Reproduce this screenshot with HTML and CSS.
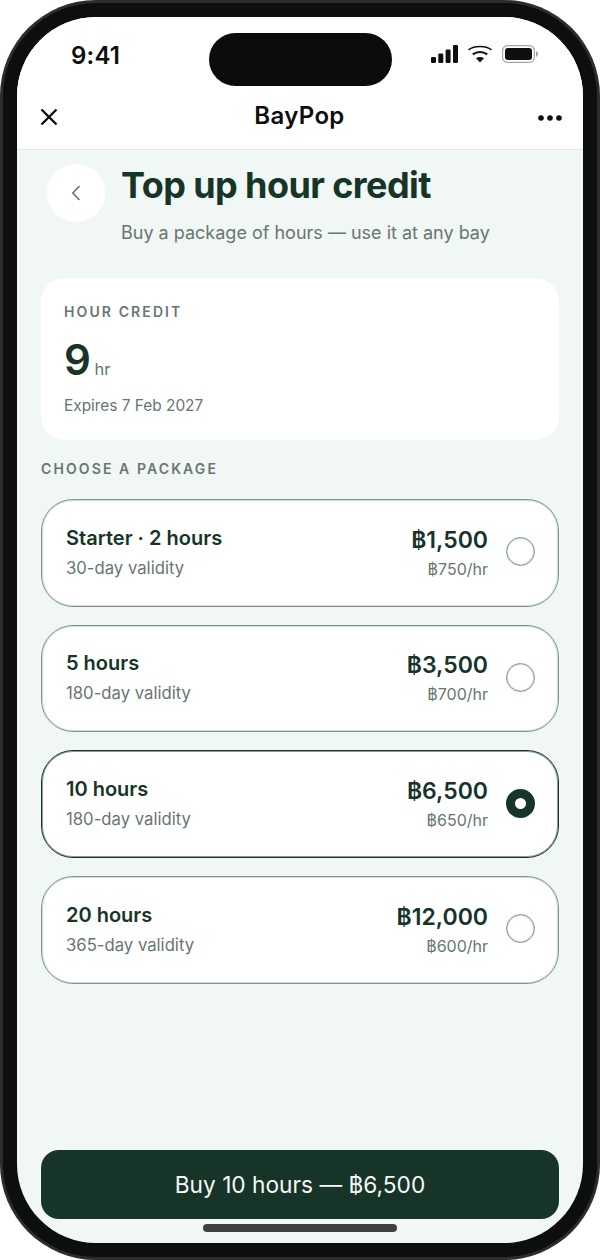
FILE: index.html
```html
<!DOCTYPE html>
<html lang="en">
<head>
<meta charset="utf-8">
<title>BayPop - Top up hour credit</title>
<link rel="stylesheet" href="styles.css">
</head>
<body>
<div class="phone">
  <div class="bezel">
    <div class="screen">
      <header class="status">
        <span class="time">9:41</span>
        <span class="island"></span>
        <span class="status-icons">
          <svg class="ic-signal" width="27" height="18" viewBox="0 0 27 18"><rect x="0" y="12" width="5" height="6" rx="1.2"/><rect x="7.3" y="8.5" width="5" height="9.5" rx="1.2"/><rect x="14.6" y="4.5" width="5" height="13.5" rx="1.2"/><rect x="22" y="0" width="5" height="18" rx="1.2"/></svg>
          <svg class="ic-wifi" width="26" height="18" viewBox="0 0 26 18"><path d="M1.500 4.800C7.500.4 18.500.4 24.500 4.800" fill="none" stroke="#0c0f0e" stroke-width="1.500"/><path d="M5.800 9.400c4.300-3.300 10.100-3.300 14.400 0" fill="none" stroke="#0c0f0e" stroke-width="2"/><path d="M9 13.300c2.400-1.700 5.600-1.700 8 0L13 17.500z"/></svg>
          <svg class="ic-batt" width="36" height="18" viewBox="0 0 36 18"><rect x=".6" y=".6" width="31.800" height="16.800" rx="5" fill="#fff" stroke="#a3a5a4" stroke-width="1.200"/><rect x="3" y="3" width="27" height="12" rx="3"/><path d="M34 6v6c1.200-.4 2-1.600 2-3s-.8-2.600-2-3z" fill="#a3a5a4"/></svg>
        </span>
      </header>
      <nav class="navbar">
        <svg class="ic-close" width="18" height="18" viewBox="0 0 18 18"><path d="M1.500 1.500l15 15M16.500 1.500l-15 15" fill="none" stroke="#0c0f0e" stroke-width="2.400"/></svg>
        <span class="brand">BayPop</span>
        <svg class="ic-more" width="24" height="6" viewBox="0 0 24 6"><circle cx="3" cy="3" r="2.800"/><circle cx="12" cy="3" r="2.800"/><circle cx="21" cy="3" r="2.800"/></svg>
      </nav>
      <main class="content">
        <div class="head">
          <button class="back" type="button" aria-label="Back">
            <svg width="10" height="16" viewBox="0 0 10 16"><path d="M8.500 1L1.800 8l6.700 7" fill="none" stroke="#5f6f67" stroke-width="1.500"/></svg>
          </button>
          <div class="head-text">
            <h1>Top up hour credit</h1>
            <p>Buy a package of hours — use it at any bay</p>
          </div>
        </div>
        <section class="credit">
          <div class="eyebrow">HOUR CREDIT</div>
          <div class="balance"><span class="num">9</span><span class="unit">hr</span></div>
          <div class="expires">Expires 7 Feb 2027</div>
        </section>
        <div class="eyebrow section-label">CHOOSE A PACKAGE</div>
        <div class="packages">
          <div class="pkg">
            <div class="pkg-main"><div class="pkg-name">Starter · 2 hours</div><div class="pkg-valid">30-day validity</div></div>
            <div class="pkg-price"><div class="price">฿1,500</div><div class="rate">฿750/hr</div></div>
            <span class="radio"></span>
          </div>
          <div class="pkg">
            <div class="pkg-main"><div class="pkg-name">5 hours</div><div class="pkg-valid">180-day validity</div></div>
            <div class="pkg-price"><div class="price">฿3,500</div><div class="rate">฿700/hr</div></div>
            <span class="radio"></span>
          </div>
          <div class="pkg selected">
            <div class="pkg-main"><div class="pkg-name">10 hours</div><div class="pkg-valid">180-day validity</div></div>
            <div class="pkg-price"><div class="price">฿6,500</div><div class="rate">฿650/hr</div></div>
            <span class="radio on"></span>
          </div>
          <div class="pkg">
            <div class="pkg-main"><div class="pkg-name">20 hours</div><div class="pkg-valid">365-day validity</div></div>
            <div class="pkg-price"><div class="price">฿12,000</div><div class="rate">฿600/hr</div></div>
            <span class="radio"></span>
          </div>
        </div>
        <div class="spacer"></div>
        <button class="buy" type="button">Buy 10 hours — ฿6,500</button>
        <div class="home"></div>
      </main>
    </div>
  </div>
</div>
</body>
</html>
```
FILE: styles.css
```css
* { box-sizing: border-box; }
html, body { margin: 0; padding: 0; background: #fff; }
body { font-family: Inter, "Noto Sans", "DejaVu Sans", sans-serif; color: #163428; }
.phone { width: 600px; height: 1260px; padding: 3px; border-radius: 96px; background: #2b2d2d; }
.bezel { width: 100%; height: 100%; padding: 14px; border-radius: 93px; background: #0c0f0e; }
.screen { width: 100%; height: 100%; border-radius: 79px; overflow: hidden; background: #f1f7f4; display: flex; flex-direction: column; }
.status { height: 73px; flex: none; background: #fff; display: grid; grid-template-columns: 1fr 183px 1fr; align-items: start; padding-top: 16px; }
.time { font-size: 24px; font-weight: 600; color: #0c0f0e; line-height: 28px; padding: 9px 0 0 54px; letter-spacing: 0.2px; }
.island { height: 53px; border-radius: 27px; background: #0a0d0c; }
.status-icons { display: flex; align-items: center; gap: 9px; padding: 12px 0 0 39px; }
.status-icons svg { fill: #0c0f0e; display: block; }
.navbar { height: 60px; flex: none; background: #fff; border-bottom: 1px solid #e3e6e4; display: flex; align-items: center; justify-content: space-between; padding: 0 21px 5px 23px; }
.navbar svg { fill: #0c0f0e; display: block; }
.navbar .ic-more { margin-top: 2px; }
.brand { font-size: 24px; font-weight: 600; color: #0c0f0e; line-height: 30px; letter-spacing: 0.35px; margin: 0 0 2px 3px; }
.content { flex: 1; min-height: 0; display: flex; flex-direction: column; padding: 0 24px; }
.head { display: flex; gap: 16px; padding: 14px 0 0 6px; }
.back { width: 58px; height: 58px; flex: none; border: 0; border-radius: 50%; background: #fff; display: flex; align-items: center; justify-content: center; padding: 0; }
.head-text { min-width: 0; }
h1 { margin: -1px 0 0; font-size: 36px; line-height: 44px; font-weight: 700; color: #163428; letter-spacing: -0.58px; }
.head-text p { margin: 14px 0 0; font-size: 18px; line-height: 24px; color: #68766f; }
.credit { margin-top: 33px; height: 162px; background: #fff; border-radius: 24px; padding: 25px 23px 0; flex: none; }
.eyebrow { font-size: 14px; line-height: 18px; font-weight: 600; letter-spacing: 2.1px; color: #68766f; }
.balance { display: flex; align-items: baseline; gap: 5px; margin-top: 13px; }
.num { font-size: 42px; line-height: 52px; font-weight: 600; color: #163428; letter-spacing: -1.5px; }
.unit { font-size: 16.5px; color: #68766f; }
.expires { margin-top: 10px; font-size: 15.4px; line-height: 20px; color: #68766f; }
.section-label { margin-top: 20px; }
.packages { margin-top: 21px; display: flex; flex-direction: column; gap: 18px; }
.pkg { height: 107.67px; background: #fff; border: 1px solid #7f978b; box-shadow: inset 0 0 0 1px rgba(127, 151, 139, 0.35); border-radius: 32px; display: flex; align-items: center; padding: 0 23px 0 24px; }
.pkg.selected { border-color: #163428; box-shadow: inset 0 0 0 1px rgba(22, 52, 40, 0.5); }
.pkg-main { flex: 1; min-width: 0; padding-bottom: 2px; }
.pkg-name { font-size: 20px; line-height: 28px; font-weight: 600; color: #163428; }
.pkg-valid { margin-top: 4px; font-size: 16.7px; line-height: 24px; color: #68766f; }
.pkg-price { text-align: right; }
.price { font-size: 23px; line-height: 30px; font-weight: 600; color: #163428; }
.rate { margin-top: 2px; font-size: 16px; line-height: 24px; color: #68766f; }
.radio { width: 29px; height: 29px; flex: none; margin: 0 0 2px 18px; border-radius: 50%; border: 1px solid #7f978b; box-shadow: inset 0 0 0 1px rgba(127, 151, 139, 0.35); }
.radio.on { border: 9px solid #163428; box-shadow: none; background: #fff; }
.spacer { flex: 1; }
.buy { height: 69px; flex: none; border: 0; border-radius: 18px; background: #163428; color: #f6f8f7; font: 400 22.7px/30px Inter, "Noto Sans", sans-serif; padding: 0; }
.home { width: 194px; height: 8px; flex: none; align-self: center; margin: 5px 0 11px; border-radius: 4px; background: #3f4240; }
```
